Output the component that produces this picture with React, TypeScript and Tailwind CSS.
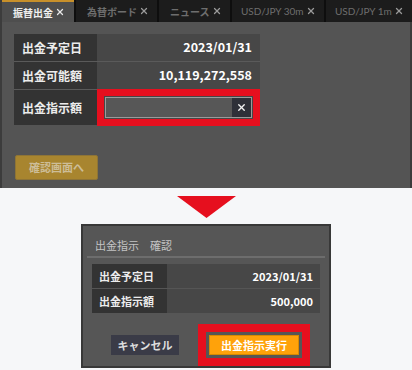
import { X } from 'lucide-react';

const font = { fontFamily: '"Noto Sans CJK JP", "Noto Sans", sans-serif' };

const tabs = [
  { label: '振替出金', w: 'w-[72px]', active: true },
  { label: '為替ボード', w: 'w-[81px]' },
  { label: 'ニュース', w: 'w-[71px]' },
  { label: 'USD/JPY 30m', w: 'w-[92px]', latin: true },
  { label: 'USD/JPY 1m', w: 'w-[86px]', latin: true },
];

function TabBar() {
  return (
    <div className="flex h-[22px] gap-[2px] bg-[#0e0e0e] pr-[2px]">
      {tabs.map((t) =>
        t.active ? (
          <div
            key={t.label}
            className={`${t.w} flex shrink-0 items-center justify-between whitespace-nowrap border-t-2 border-[#c8902a] bg-[#4e4e4e] pl-[11px] pr-[9px] text-[10px] font-bold text-[#f0f0f0]`}
          >
            <span>{t.label}</span>
            <X size={10} strokeWidth={3} className="shrink-0 text-[#e8e8e8]" />
          </div>
        ) : (
          <div
            key={t.label}
            className={`${t.w} flex shrink-0 items-center justify-between whitespace-nowrap bg-[#1c1c1c] pr-[8px] text-[#6e6e6e] ${
              t.latin ? 'pl-[9px] font-["Lato",sans-serif] text-[10px] font-normal' : 'pl-[11px] text-[10px] font-bold'
            }`}
          >
            <span>{t.label}</span>
            <X size={10} strokeWidth={3} className="shrink-0 text-[#9a9a9a]" />
          </div>
        )
      )}
    </div>
  );
}

function TopPanel() {
  return (
    <div className="flex h-[188px] flex-col border-x-2 border-[#3c3c3c] bg-[#545454]">
      <TabBar />
      <div className="ml-[12px] mt-[12px] flex w-[246px] flex-col gap-[1px] bg-[#5a5a5a]">
        <div className="flex h-[27px]">
          <div className="flex w-[83px] shrink-0 items-center bg-[#333333] pl-[8px] text-[12px] font-bold text-[#ececec]">
            出金予定日
          </div>
          <div className="flex flex-1 items-center justify-end bg-[#474747] pr-[8px] text-[12.5px] font-bold text-white">
            2023/01/31
          </div>
        </div>
        <div className="flex h-[27px]">
          <div className="flex w-[83px] shrink-0 items-center bg-[#333333] pl-[8px] text-[12px] font-bold text-[#ececec]">
            出金可能額
          </div>
          <div className="flex flex-1 items-center justify-end bg-[#474747] pr-[8px] text-[12.5px] font-bold text-white">
            10,119,272,558
          </div>
        </div>
        <div className="flex h-[35px]">
          <div className="flex w-[83px] shrink-0 items-center bg-[#333333] pl-[8px] text-[12px] font-bold text-[#ececec]">
            出金指示額
          </div>
          <div className="-my-[1px] flex flex-1 border-[7px] border-[#e60f1e] bg-[#474747] p-[1px]">
            <div className="flex flex-1 border border-[#9a9a9a] bg-[#575757]">
              <div className="flex-1" />
              <div className="flex w-[19px] items-center justify-center bg-[#2e3038]">
                <X size={11} strokeWidth={3} className="text-[#f2f2f2]" />
              </div>
            </div>
          </div>
        </div>
      </div>
      <div className="ml-[13px] mt-[30px] flex h-[25px] w-[83px] items-center justify-center rounded-[2px] border border-[#8e7436] bg-[#a8852f] text-[11px] font-bold text-[#cdbd97]">
        確認画面へ
      </div>
    </div>
  );
}

function Dialog() {
  return (
    <div className="mx-auto flex h-[144px] w-[250px] flex-col border-2 border-[#383838] bg-[#565656]">
      <div className="flex h-[28px] items-end pl-[12px] pb-[1px] text-[11px] text-[#c4c4c4]">
        出金指示　確認
      </div>
      <div className="mx-[4px] mt-[2px] h-[2px] bg-[#6d6d6d]" />
      <div className="mx-[9px] mt-[6px] flex flex-col gap-[1px] bg-[#555555]">
        <div className="flex h-[24px]">
          <div className="flex w-[75px] shrink-0 items-center bg-[#333333] pl-[7px] text-[11px] font-bold text-[#ececec]">
            出金予定日
          </div>
          <div className="flex flex-1 items-center justify-end bg-[#474747] pr-[7px] text-[11px] font-bold text-white">
            2023/01/31
          </div>
        </div>
        <div className="flex h-[24px]">
          <div className="flex w-[75px] shrink-0 items-center bg-[#333333] pl-[7px] text-[11px] font-bold text-[#ececec]">
            出金指示額
          </div>
          <div className="flex flex-1 items-center justify-end bg-[#474747] pr-[7px] text-[11px] font-bold text-white">
            500,000
          </div>
        </div>
      </div>
      <div className="mt-[11px] flex items-center pl-[28px]">
        <div className="flex h-[20px] w-[68px] items-center justify-center bg-[#3a3b47] text-[11px] font-bold text-[#dedede]">
          キャンセル
        </div>
        <div className="ml-[19px] border-[8px] border-[#e60f1e] p-[3px]">
          <div className="flex h-[20px] w-[90px] items-center justify-center border border-[#d98a00] bg-[#ffa20a] text-[11px] font-bold text-white">
            出金指示実行
          </div>
        </div>
      </div>
    </div>
  );
}

export default function App() {
  return (
    <div className="flex h-[370px] w-[412px] flex-col overflow-hidden bg-[#f6f7f9]" style={font}>
      <TopPanel />
      <div className="flex justify-center pt-[8px]">
        <svg width="59" height="22" viewBox="0 0 59 22">
          <polygon points="0,0 59,0 29.5,22" fill="#e60f1e" />
        </svg>
      </div>
      <div className="mt-[6px]">
        <Dialog />
      </div>
    </div>
  );
}
